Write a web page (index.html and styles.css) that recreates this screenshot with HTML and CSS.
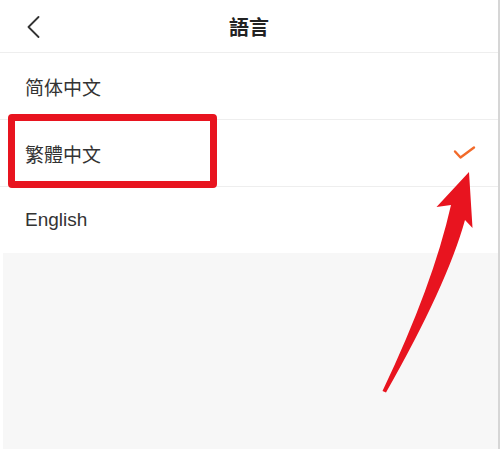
FILE: index.html
```html
<!DOCTYPE html>
<html lang="zh-Hant">
<head>
<meta charset="utf-8">
<title>語言</title>
<link rel="stylesheet" href="styles.css">
</head>
<body>
<div class="screen">
  <header class="nav">
    <svg class="back" width="14" height="22" viewBox="0 0 14 22"><polyline points="11.5,1 1.5,11 11.5,21" fill="none" stroke="#333" stroke-width="1.8" stroke-linecap="round" stroke-linejoin="round"/></svg>
    <h1 class="title">語言</h1>
    <span></span>
  </header>
  <ul class="list">
    <li class="row">简体中文</li>
    <li class="row">繁體中文
      <svg class="check" width="24" height="16" viewBox="0 0 24 16"><polyline points="2,6.5 7.5,12.5 21,2.5" fill="none" stroke="#f26a2a" stroke-width="2.4" stroke-linecap="round" stroke-linejoin="round"/></svg>
    </li>
    <li class="row last">English</li>
  </ul>
  <div class="rest"></div>
  <div class="highlight"></div>
  <svg class="arrow" width="500" height="449" viewBox="0 0 500 449"><path d="M469,172 L472.5,228 L465,220 Q447,285 386,392.5 L382.5,391 Q433,285 451,205 L436.5,207 Z" fill="#e8141f"/></svg>
</div>
</body>
</html>
```
FILE: styles.css
```css
* { box-sizing: border-box; }
html, body { margin: 0; padding: 0; background: #fff; }
body { font-family: "Liberation Sans", "Noto Sans CJK TC", "Noto Sans CJK SC", sans-serif; color: #333; }
.screen { position: relative; width: 500px; height: 449px; display: flex; flex-direction: column; border-right: 2px solid #d6d6d6; overflow: hidden; }
.nav { height: 53px; flex: none; display: grid; grid-template-columns: 1fr auto 1fr; align-items: center; border-bottom: 1px solid #eeeeee; }
.back { display: block; margin-top: 1px; margin-left: 27px; }
.title { margin: 0; font-family: "Noto Sans CJK TC", sans-serif; font-size: 20px; font-weight: 700; color: #222; line-height: 1; margin-top: 1px; }
.list { list-style: none; margin: 0; padding: 0; flex: none; }
.row { height: 67px; border-bottom: 1px solid #eeeeee; padding: 0 21px 0 25px; display: flex; align-items: center; justify-content: space-between; font-size: 19px; color: #333; }
.row.last { border-bottom: none; height: 66px; }
.check { display: block; margin-top: 0; }
.rest { flex: 1; background: #f7f7f7; margin-left: 3px; }
.highlight { position: absolute; left: 8px; top: 114px; width: 209px; height: 74px; border: 7px solid #e8141f; border-radius: 4px; }
.arrow { position: absolute; left: 0; top: 0; }
```
